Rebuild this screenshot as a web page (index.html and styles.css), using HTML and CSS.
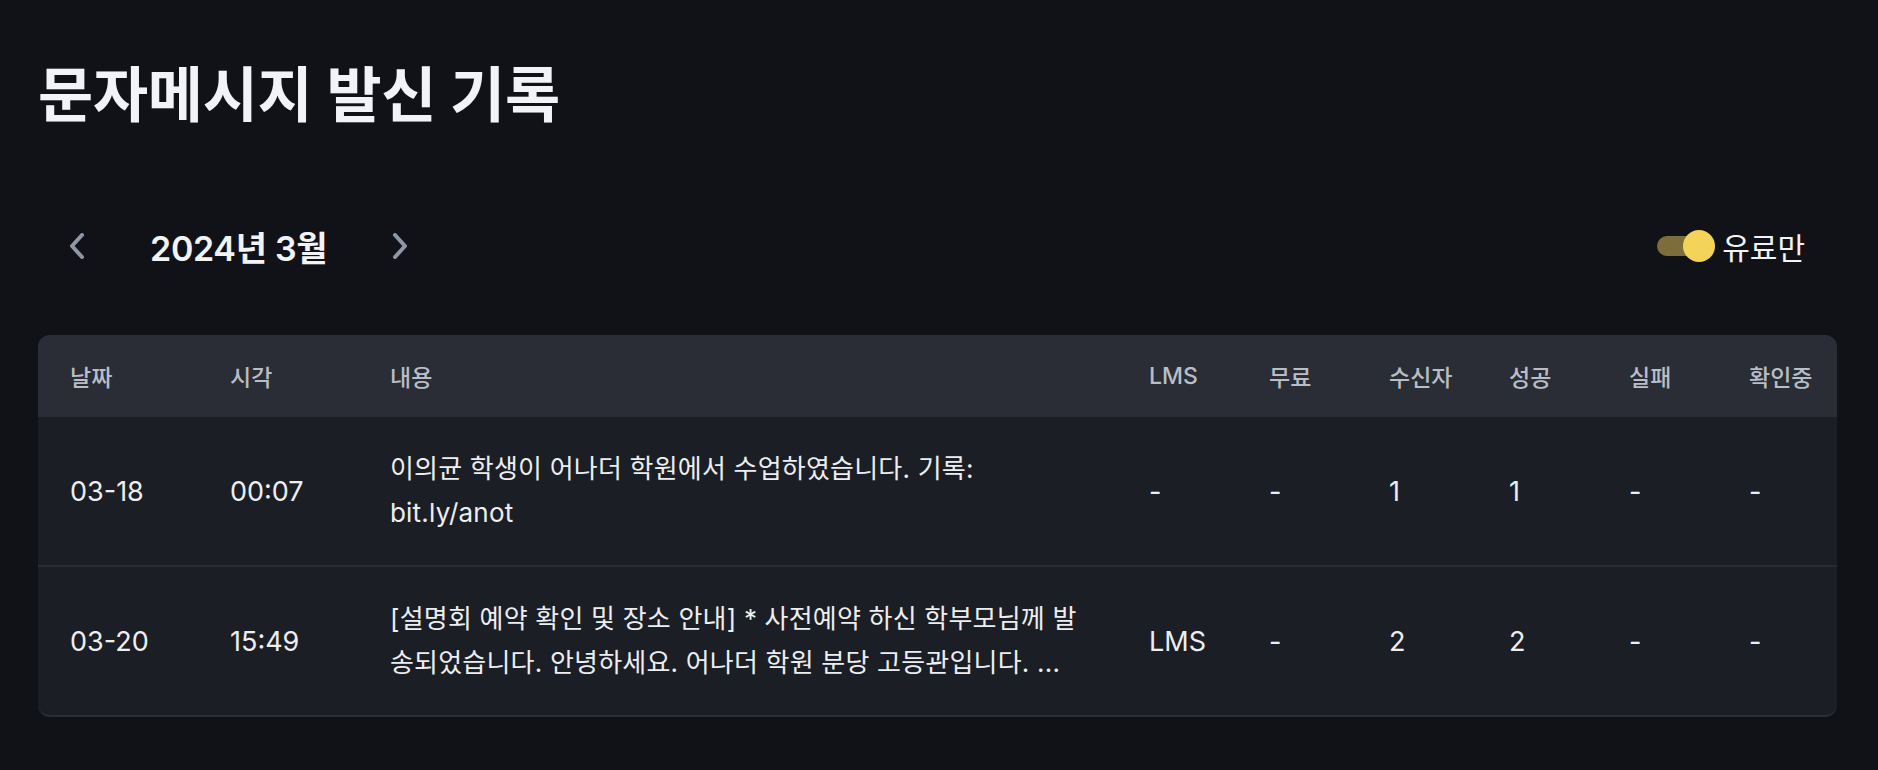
FILE: index.html
```html
<!DOCTYPE html>
<html lang="ko">
<head>
<meta charset="utf-8">
<title>문자메시지 발신 기록</title>
<link rel="stylesheet" href="styles.css">
</head>
<body>
<main class="page">
  <h1 class="title">문자메시지 발신 기록</h1>

  <div class="toolbar">
    <div class="month-nav">
      <button class="nav-btn" aria-label="이전 달">
        <svg width="18" height="26" viewBox="0 0 18 26"><path d="M13 2 L3 13 L13 24" fill="none" stroke="currentColor" stroke-width="4" stroke-linecap="round" stroke-linejoin="round"/></svg>
      </button>
      <span class="month-label">2024년 3월</span>
      <button class="nav-btn" aria-label="다음 달">
        <svg width="18" height="26" viewBox="0 0 18 26"><path d="M5 2 L15 13 L5 24" fill="none" stroke="currentColor" stroke-width="4" stroke-linecap="round" stroke-linejoin="round"/></svg>
      </button>
    </div>
    <label class="toggle">
      <span class="switch"><span class="knob"></span></span>
      <span class="toggle-label">유료만</span>
    </label>
  </div>

  <div class="card">
    <table class="log-table">
      <colgroup>
        <col class="c-date"><col class="c-time"><col class="c-content">
        <col class="c-num"><col class="c-num"><col class="c-num"><col class="c-num"><col class="c-num"><col class="c-num">
      </colgroup>
      <thead>
        <tr>
          <th>날짜</th><th>시각</th><th>내용</th><th>LMS</th><th>무료</th><th>수신자</th><th>성공</th><th>실패</th><th>확인중</th>
        </tr>
      </thead>
      <tbody>
        <tr>
          <td>03-18</td><td>00:07</td>
          <td class="content">이의균 학생이 어나더 학원에서 수업하였습니다. 기록: bit.ly/anot</td>
          <td>-</td><td>-</td><td>1</td><td>1</td><td>-</td><td>-</td>
        </tr>
        <tr>
          <td>03-20</td><td>15:49</td>
          <td class="content">[설명회 예약 확인 및 장소 안내] * 사전예약 하신 학부모님께 발송되었습니다. 안녕하세요. 어나더 학원 분당 고등관입니다. ...</td>
          <td>LMS</td><td>-</td><td>2</td><td>2</td><td>-</td><td>-</td>
        </tr>
      </tbody>
    </table>
  </div>
</main>
</body>
</html>
```

FILE: styles.css
```css
html, body {
  margin: 0;
  background: #111217;
}

body {
  font-family: "Inter", "Noto Sans CJK KR", sans-serif;
  color: #eceef1;
}

.page {
  padding: 60px 41px 40px 38px;
}

.title {
  margin: 0;
  font-size: 60px;
  line-height: 70px;
  font-weight: 700;
  color: #f1f3f6;
  letter-spacing: -0.3px;
}

.toolbar {
  display: flex;
  align-items: center;
  justify-content: space-between;
  height: 64px;
  margin-top: 84px;
  padding: 0 32px 0 31px;
}

.month-nav {
  display: flex;
  align-items: center;
  gap: 63px;
}

.nav-btn {
  display: flex;
  align-items: center;
  justify-content: center;
  padding: 0;
  border: 0;
  background: none;
  color: #8e97a6;
  cursor: pointer;
}

.month-label {
  font-size: 34px;
  font-weight: 600;
  color: #f1f3f6;
  letter-spacing: -0.3px;
}

.toggle {
  display: flex;
  align-items: center;
  gap: 7px;
  cursor: pointer;
}

.switch {
  position: relative;
  display: block;
  width: 52px;
  height: 20px;
  border-radius: 10px;
  background: #7d6d3b;
  margin-right: 6px;
}

.knob {
  position: absolute;
  top: -6px;
  right: -6px;
  width: 32px;
  height: 32px;
  border-radius: 50%;
  background: #f4d35b;
}

.toggle-label {
  font-size: 30px;
  color: #f1f3f6;
}

.card {
  margin-top: 57px;
  border-radius: 12px;
  overflow: hidden;
  background: #1c1e25;
  border-bottom: 2px solid #2b2e35;
}

.log-table {
  width: 100%;
  table-layout: fixed;
  border-collapse: collapse;
}

.c-date, .c-time { width: 160px; }
.c-content { width: 759px; }
.c-num { width: 120px; }

.log-table th {
  height: 82px;
  padding: 0 32px;
  background: #2a2d35;
  color: #b9bdc5;
  font-size: 23px;
  font-weight: 500;
  text-align: left;
  white-space: nowrap;
}

.log-table td {
  height: 148px;
  padding: 0 32px;
  font-size: 27px;
  color: #eceef1;
  vertical-align: middle;
  text-align: left;
}

.log-table tbody tr + tr td {
  border-top: 2px solid #2a2c33;
}

.log-table td.content {
  font-size: 26px;
  line-height: 44px;
  letter-spacing: 0.2px;
}
```
